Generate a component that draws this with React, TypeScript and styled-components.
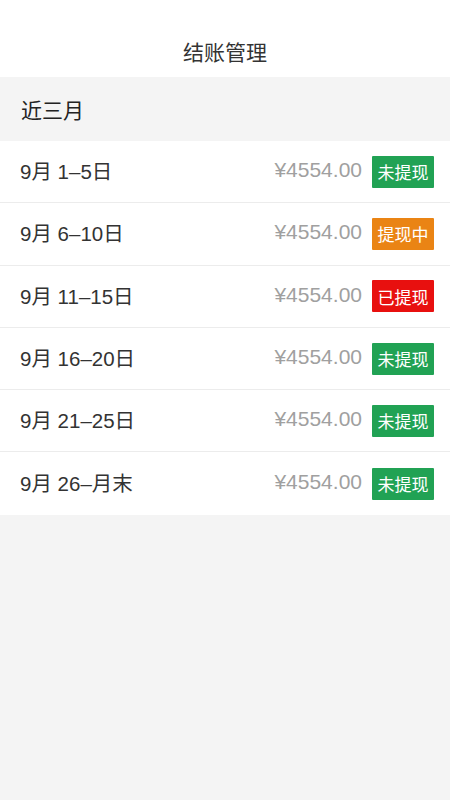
import styled, { createGlobalStyle } from 'styled-components';

const GlobalStyle = createGlobalStyle`
  html, body { margin: 0; padding: 0; background: #f4f4f4; }
  body { font-family: "Liberation Sans", "Noto Sans CJK SC", sans-serif; }
  #root { min-height: 100vh; }
`;

const Page = styled.div`
  width: 450px;
  min-height: 800px;
  background: #f4f4f4;
`;

const NavBar = styled.header`
  height: 77px;
  background: #fff;
  display: flex;
  align-items: flex-end;
  justify-content: center;
  padding-bottom: 11px;
  box-sizing: border-box;
  font-size: 21px;
  color: #333;
`;

const SectionTitle = styled.div`
  height: 64px;
  display: flex;
  align-items: center;
  padding-left: 21px;
  font-size: 21px;
  color: #222;
`;

const List = styled.div`
  background: #fff;
`;

const Row = styled.div`
  height: 62.3px;
  box-sizing: border-box;
  display: flex;
  align-items: center;
  padding: 0 16px 0 20px;
  border-bottom: 1.5px solid #ececec;
  &:last-child { border-bottom: none; }
`;

const Period = styled.span`
  flex: 1;
  font-size: 20.5px;
  color: #333;
  margin-top: -3px;
`;

const Amount = styled.span`
  font-size: 21px;
  color: #a0a0a0;
  margin-right: 10px;
  margin-top: -3px;
`;

const statusColors: Record<string, string> = {
  未提现: '#21a254',
  提现中: '#ea8414',
  已提现: '#e8100f',
};

const Badge = styled.span<{ $bg: string }>`
  width: 62px;
  height: 32px;
  display: flex;
  align-items: center;
  justify-content: center;
  background: ${p => p.$bg};
  border-radius: 1px;
  color: #fff;
  font-size: 17px;
`;

const rows = [
  { period: '9月 1–5日', status: '未提现' },
  { period: '9月 6–10日', status: '提现中' },
  { period: '9月 11–15日', status: '已提现' },
  { period: '9月 16–20日', status: '未提现' },
  { period: '9月 21–25日', status: '未提现' },
  { period: '9月 26–月末', status: '未提现' },
];

export default function App() {
  return (
    <Page>
      <GlobalStyle />
      <NavBar>结账管理</NavBar>
      <SectionTitle>近三月</SectionTitle>
      <List>
        {rows.map(r => (
          <Row key={r.period}>
            <Period>{r.period}</Period>
            <Amount>¥4554.00</Amount>
            <Badge $bg={statusColors[r.status]}>{r.status}</Badge>
          </Row>
        ))}
      </List>
    </Page>
  );
}
